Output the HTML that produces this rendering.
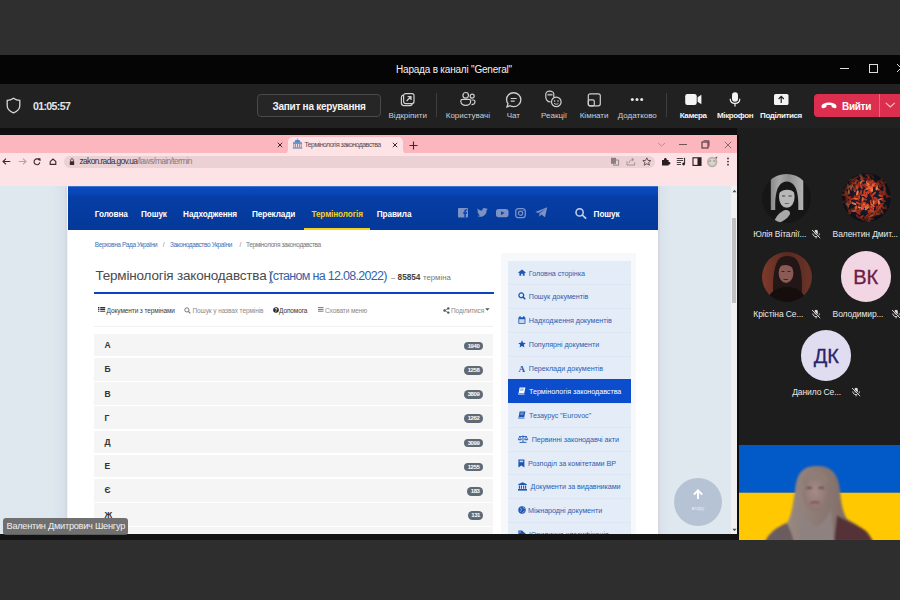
<!DOCTYPE html>
<html><head><meta charset="utf-8">
<style>
*{margin:0;padding:0;box-sizing:border-box}
html,body{width:900px;height:600px;overflow:hidden;background:#2e2e2e;font-family:"Liberation Sans",sans-serif}
.a{position:absolute;white-space:nowrap}
svg.a{overflow:visible}
.t8{font-size:8px;line-height:8px;top:111.8px;text-align:center}
.t8b{font-size:8px;line-height:8px;top:111.8px;text-align:center;font-weight:bold;letter-spacing:-0.4px}
.t10{font-size:10px;line-height:10px}
.t10b{font-size:10px;line-height:10px;font-weight:bold}
#top{left:0;top:0;width:900px;height:55px;background:#2f2f2f}
#tbar{left:0;top:55px;width:900px;height:29px;background:#050505}
#tool{left:0;top:84px;width:900px;height:44px;background:#212121}
#tool2{left:0;top:128px;width:737px;height:7px;background:#100e0f}
#right{left:737px;top:128px;width:163px;height:412px;background:#1d1d1d}
#bottom{left:0;top:540px;width:900px;height:60px;background:#2e2e2e}
#bstrip{left:0;top:534px;width:739px;height:6px;background:#141414}
#browser{left:0;top:135px;width:737px;height:399px;background:#dfe8ef;overflow:hidden}
#tabs{left:0;top:0;width:737px;height:18px;background:#fbb6be}
#addr{left:0;top:18px;width:737px;height:33px;background:#fde3e6}
#page{left:68px;top:51px;width:590px;height:360px;background:#fff}
#hdr{left:0;top:0;width:590px;height:44px;background:linear-gradient(#0844b8,#0539a0)}
</style></head><body>
<div class="a" id="top"></div>
<div class="a" id="tbar"></div>
<div class="a t10" style="left:396px;top:65px;color:#f2f2f2;letter-spacing:-0.2px">Нарада в каналі "General"</div>
<div class="a" style="left:840px;top:68px;width:9px;height:1px;background:#ddd"></div>
<div class="a" style="left:869px;top:64px;width:9px;height:9px;border:1px solid #ddd"></div>
<svg class="a" style="left:895px;top:62px" width="10" height="12"><path d="M2 2 L10 10 M10 2 L2 10" stroke="#ddd" stroke-width="1"/></svg>
<div class="a" id="tool"></div>
<div class="a" id="tool2"></div>
<svg class="a" style="left:6px;top:97px" width="15" height="17" viewBox="0 0 15 17"><path d="M7.5 1.2 C5.5 2.6 3.5 3.3 1.2 3.4 V8.5 C1.2 12 3.6 14.3 7.5 15.8 C11.4 14.3 13.8 12 13.8 8.5 V3.4 C11.5 3.3 9.5 2.6 7.5 1.2 Z" fill="none" stroke="#d8d8d8" stroke-width="1.3"/></svg>
<div class="a" style="left:33px;top:101.4px;font-size:10.6px;line-height:10px;font-weight:bold;color:#e6e6e6;letter-spacing:-0.65px">01:05:57</div>
<div class="a" style="left:257px;top:94px;width:124px;height:23px;border:1px solid #4a4a4a;border-radius:4px;background:#262626"></div>
<div class="a t10b" style="left:257px;top:101.5px;width:124px;text-align:center;color:#f4f4f4;letter-spacing:-0.25px">Запит на керування</div>
<!-- icons -->
<svg class="a" style="left:400px;top:92px" width="16" height="15" viewBox="0 0 16 15"><path d="M3 3.2 C1.9 3.5 1.4 4.3 1.4 5.5 V11 C1.4 12.6 2.4 13.6 4 13.6 H10 C11.2 13.6 12 13.1 12.3 12" fill="none" stroke="#d0d0d0" stroke-width="1.2"/><rect x="3.6" y="1.6" width="10.4" height="10" rx="2" fill="none" stroke="#d0d0d0" stroke-width="1.2"/><path d="M6.6 9 L10.6 5 M7.6 4.6 H11 V8" fill="none" stroke="#d0d0d0" stroke-width="1.2"/></svg>
<div class="a" style="left:436px;top:93px;width:1px;height:24px;background:#3e3e3e"></div>
<svg class="a" style="left:458px;top:91px" width="20" height="16" viewBox="0 0 20 16"><circle cx="7.7" cy="4.3" r="2.8" fill="none" stroke="#d0d0d0" stroke-width="1.2"/><path d="M4.6 8.4 H10.8 C12 8.4 12.7 9.2 12.7 10.2 C12.7 12.8 10.6 14.3 7.7 14.3 C4.8 14.3 2.8 12.8 2.8 10.2 C2.8 9.2 3.5 8.4 4.6 8.4 Z" fill="none" stroke="#d0d0d0" stroke-width="1.2"/><circle cx="14.2" cy="5.2" r="2" fill="none" stroke="#d0d0d0" stroke-width="1.2"/><path d="M13.6 9 H15.3 C16.3 9 17 9.7 17 10.6 C17 12.6 15.6 13.7 13.5 13.7" fill="none" stroke="#d0d0d0" stroke-width="1.2"/></svg>
<svg class="a" style="left:505px;top:92px" width="18" height="17" viewBox="0 0 18 17"><g transform="translate(8.7 7.7) scale(1.1) translate(-8.7 -7.7)"><path d="M2.6 14.3 L3.5 11.3 C2.6 10 2.2 8.8 2.2 7.5 C2.2 4 5.0 1.4 8.6 1.4 C12.2 1.4 15.2 4.2 15.2 7.7 C15.2 11.2 12.2 14 8.6 14 C7.4 14 6.3 13.7 5.4 13.2 Z" fill="none" stroke="#d0d0d0" stroke-width="1.2"/><path d="M6 6.6 H11.4 M6 9 H9.6" stroke="#d0d0d0" stroke-width="1.1"/></g></svg>
<svg class="a" style="left:544px;top:90px" width="20" height="19" viewBox="0 0 20 19"><path d="M6.5 11.9 C3.6 11.9 1.8 9.8 1.8 7 V4.2 C1.8 2.4 3.5 1.2 5.7 1.2 C8 1.2 9.8 2.4 9.8 4.2 V7 L11.4 8.2" fill="none" stroke="#d0d0d0" stroke-width="1.2"/><path d="M3.5 3.8 H8.5 V5.6 H3.5Z" fill="#aaa"/><circle cx="12.3" cy="11.9" r="4.8" fill="#222" stroke="#d0d0d0" stroke-width="1.2"/><circle cx="10.6" cy="11" r="0.8" fill="#d0d0d0"/><circle cx="14" cy="11" r="0.8" fill="#d0d0d0"/><path d="M10.2 13.3 C11.2 14.5 13.4 14.5 14.4 13.3" fill="none" stroke="#d0d0d0" stroke-width="1"/></svg>
<svg class="a" style="left:586px;top:92px" width="16" height="16" viewBox="0 0 16 16"><rect x="2.3" y="1.8" width="12" height="12" rx="2" fill="none" stroke="#d0d0d0" stroke-width="1.2"/><rect x="2.3" y="7.8" width="6" height="6" rx="1.4" fill="none" stroke="#d0d0d0" stroke-width="1.2"/></svg>
<svg class="a" style="left:629px;top:96px" width="16" height="7"><circle cx="3.3" cy="3.5" r="1.5" fill="#e8e8e8"/><circle cx="8" cy="3.5" r="1.5" fill="#e8e8e8"/><circle cx="12.7" cy="3.5" r="1.5" fill="#e8e8e8"/></svg>
<div class="a" style="left:666px;top:93px;width:1px;height:24px;background:#3e3e3e"></div>
<svg class="a" style="left:684px;top:93px" width="19" height="13" viewBox="0 0 19 13"><rect x="1.2" y="1" width="11.5" height="11" rx="2.2" fill="#f4f4f4"/><path d="M13.6 4.2 L17.4 1.8 V11.2 L13.6 8.8 Z" fill="#f4f4f4"/></svg>
<svg class="a" style="left:729px;top:91px" width="12" height="17" viewBox="0 0 12 17"><rect x="3" y="1.2" width="6" height="9.6" rx="3" fill="#f4f4f4"/><path d="M1.2 7.8 C1.2 10.6 3.2 12.4 6 12.4 C8.8 12.4 10.8 10.6 10.8 7.8 M6 12.4 V15.6" fill="none" stroke="#f4f4f4" stroke-width="1.2"/></svg>
<svg class="a" style="left:773px;top:93px" width="17" height="13" viewBox="0 0 17 13"><rect x="1" y="1" width="14.5" height="11" rx="1.6" fill="#f4f4f4"/><path d="M8.2 10 V3.6 M5.6 6 L8.2 3.4 L10.8 6" fill="none" stroke="#222" stroke-width="1.2"/></svg>
<div class="a t8" style="left:367.75px;width:80px;color:#cfcfcf">Відкріпити</div>
<div class="a t8" style="left:427.85px;width:80px;color:#cfcfcf">Користувачі</div>
<div class="a t8" style="left:473.3px;width:80px;color:#cfcfcf">Чат</div>
<div class="a t8" style="left:514.1px;width:80px;color:#cfcfcf">Реакції</div>
<div class="a t8" style="left:554.1px;width:80px;color:#cfcfcf">Кімнати</div>
<div class="a t8" style="left:597.3px;width:80px;color:#cfcfcf">Додатково</div>
<div class="a t8b" style="left:653.15px;width:80px;color:#f4f4f4">Камера</div>
<div class="a t8b" style="left:695.15px;width:80px;color:#f4f4f4">Мікрофон</div>
<div class="a t8b" style="left:741px;width:80px;color:#f4f4f4">Поділитися</div>
<div class="a" style="left:814px;top:94px;width:90px;height:23px;border-radius:4px;background:#dc2f4f"></div>
<div class="a" style="left:879px;top:94px;width:1px;height:23px;background:#e86a80"></div>
<svg class="a" style="left:820px;top:101px" width="18" height="9" viewBox="0 0 18 9"><path d="M1.6 6.2 C1.2 4.6 2 3.2 4 2.4 C7 1.2 11 1.2 14 2.4 C16 3.2 16.8 4.6 16.4 6.2 C16.2 7 15.6 7.4 14.8 7.2 L12.6 6.6 C11.9 6.4 11.6 5.9 11.6 5.2 V4.4 C9.8 3.9 8.2 3.9 6.4 4.4 V5.2 C6.4 5.9 6.1 6.4 5.4 6.6 L3.2 7.2 C2.4 7.4 1.8 7 1.6 6.2Z" fill="#fff"/></svg>
<div class="a t10b" style="left:842px;top:101.5px;color:#fff;letter-spacing:-0.3px">Вийти</div>
<svg class="a" style="left:884px;top:101px" width="13" height="8"><path d="M1.8 1.8 L6.3 6 L10.8 1.8" fill="none" stroke="#f4c0ca" stroke-width="1.1"/></svg>
<div class="a" id="browser">
  <div class="a" id="tabs"></div>
  <div class="a" id="addr"></div>
  <!-- inactive tab close -->
  <svg class="a" style="left:277px;top:7px" width="6" height="6"><path d="M0.8 0.8 L5.2 5.2 M5.2 0.8 L0.8 5.2" stroke="#3a2a2e" stroke-width="1"/></svg>
  <!-- active tab -->
  <svg class="a" style="left:282px;top:1px" width="128" height="18" viewBox="0 0 128 18"><path d="M0 18 C4 18 6 16 6 13 V6 C6 3 8 1 11 1 H116 C119 1 121 3 121 6 V13 C121 16 123 18 127 18 Z" fill="#fde3e6"/></svg>
  <svg class="a" style="left:292px;top:2px" width="11" height="12" viewBox="0 0 11 12"><path d="M5.5 1 L5.5 3" stroke="#e8b030" stroke-width="1"/><path d="M2.5 5.5 C2.5 3.5 3.8 2.8 5.5 2.8 C7.2 2.8 8.5 3.5 8.5 5.5 Z" fill="#4a8ad0"/><rect x="1" y="5.5" width="9" height="1.2" fill="#3a70b8"/><path d="M1.8 7 V10.5 M3.6 7 V10.5 M5.5 7 V10.5 M7.4 7 V10.5 M9.2 7 V10.5" stroke="#6a8aa8" stroke-width="0.9"/><rect x="0.8" y="10.4" width="9.4" height="1.2" fill="#6a8aa8"/></svg>
  <div class="a" style="left:304.5px;top:5.8px;font-size:7px;line-height:7px;color:#5a4a4e;letter-spacing:-0.58px">Термінологія законодавства</div>
  <svg class="a" style="left:392px;top:7px" width="6" height="6"><path d="M0.8 0.8 L5.2 5.2 M5.2 0.8 L0.8 5.2" stroke="#3a2a2e" stroke-width="1"/></svg>
  <svg class="a" style="left:409px;top:5.5px" width="9" height="9"><path d="M4.5 0.5 V8.5 M0.5 4.5 H8.5" stroke="#3a2a2e" stroke-width="1.1"/></svg>
  <!-- window controls -->
  <svg class="a" style="left:657px;top:7px" width="9" height="6"><path d="M1 1 L4.5 4.2 L8 1" fill="none" stroke="#b88890" stroke-width="0.9"/></svg>
  <div class="a" style="left:679px;top:9px;width:8px;height:1px;background:#705558"></div>
  <svg class="a" style="left:701px;top:5px" width="9" height="9"><rect x="1" y="2" width="6" height="6" fill="none" stroke="#50383c" stroke-width="1.1"/><path d="M2.5 0.8 H8 V6.5" fill="none" stroke="#50383c" stroke-width="0.9"/></svg>
  <svg class="a" style="left:723.5px;top:5.5px" width="8" height="8"><path d="M0.8 0.8 L7.2 7.2 M7.2 0.8 L0.8 7.2" stroke="#806468" stroke-width="0.9"/></svg>
  <!-- nav icons -->
  <svg class="a" style="left:2px;top:22.5px" width="9" height="7"><path d="M8.3 3.5 H1.2 M4 0.6 L1 3.5 L4 6.4" fill="none" stroke="#3a2a2e" stroke-width="1.1"/></svg>
  <svg class="a" style="left:18px;top:22.5px" width="9" height="7"><path d="M0.7 3.5 H7.8 M5 0.6 L8 3.5 L5 6.4" fill="none" stroke="#b8a0a5" stroke-width="1.1"/></svg>
  <svg class="a" style="left:33px;top:23px" width="8" height="7"><path d="M6.4 2.2 A2.9 2.9 0 1 0 6.8 4.4" fill="none" stroke="#3a2a2e" stroke-width="1.1"/><path d="M5 0.6 H7.2 V2.8 Z" fill="#3a2a2e" stroke="#3a2a2e" stroke-width="0.6"/></svg>
  <svg class="a" style="left:48.5px;top:23px" width="8" height="7"><path d="M1.2 3.6 L4 1 L6.8 3.6 V6.4 H1.2 Z" fill="none" stroke="#3a2a2e" stroke-width="1.1"/></svg>
  <!-- address pill -->
  <div class="a" style="left:64px;top:20.5px;width:591px;height:12px;border-radius:6px;background:#ebd0d4"></div>
  <svg class="a" style="left:69px;top:22.5px" width="6" height="8"><path d="M1.6 3.4 V2.4 C1.6 1.3 2.2 0.7 3 0.7 C3.8 0.7 4.4 1.3 4.4 2.4 V3.4" fill="none" stroke="#3a2a2e" stroke-width="0.9"/><rect x="0.8" y="3.3" width="4.4" height="3.8" rx="0.5" fill="#3a2a2e"/></svg>
  <div class="a" style="left:79.5px;top:22px;font-size:8.4px;line-height:8px;letter-spacing:-0.62px;color:#3a2e31">zakon.rada.gov.ua<span style="color:#8a7a7d">/laws/main/termin</span></div>
  <svg class="a" style="left:610px;top:22px" width="10" height="9"><rect x="1" y="0.8" width="5" height="6" fill="#8a7e82"/><path d="M5 3 H8.6 V8.2 H3.6 V7" fill="none" stroke="#8a7e82" stroke-width="0.9"/></svg>
  <svg class="a" style="left:626px;top:22px" width="10" height="9"><path d="M1 4.5 V8 H8.6 V5.4" fill="none" stroke="#9a8a8e" stroke-width="0.9"/><path d="M3 6 C3.4 3.6 5 2.6 7 2.6 M5.8 1 L7.8 2.6 L5.8 4.2" fill="none" stroke="#9a8a8e" stroke-width="0.9"/></svg>
  <svg class="a" style="left:641.5px;top:22px" width="10" height="9"><path d="M4.8 0.8 L6 3.4 L8.8 3.6 L6.7 5.4 L7.4 8.2 L4.8 6.7 L2.2 8.2 L2.9 5.4 L0.8 3.6 L3.6 3.4 Z" fill="none" stroke="#5a4a4e" stroke-width="0.9"/></svg>
  <!-- extension icons -->
  <svg class="a" style="left:661px;top:22px" width="10" height="9"><path d="M1 3 H3 C3 1.6 3.6 1 4.4 1 C5.2 1 5.8 1.6 5.8 3 H7.6 V5 C8.8 5 9.4 5.5 9.4 6.3 C9.4 7.1 8.8 7.6 7.6 7.6 V8.6 H1 Z" fill="#2a1e22"/></svg>
  <svg class="a" style="left:676px;top:22px" width="11" height="9"><path d="M0.8 1.5 H7.2 M0.8 3.5 H7.2 M0.8 5.5 H5 M0.8 7.5 H5" stroke="#3a2e31" stroke-width="0.9"/><path d="M8.6 0.8 V6.8" stroke="#2a1e22" stroke-width="1"/><circle cx="7.6" cy="7" r="1.4" fill="#2a1e22"/></svg>
  <svg class="a" style="left:692px;top:22px" width="10" height="9"><rect x="1" y="0.8" width="8" height="7.6" fill="none" stroke="#2a1e22" stroke-width="1.1"/><rect x="5.5" y="0.8" width="3.5" height="7.6" fill="#2a1e22"/></svg>
  <svg class="a" style="left:706px;top:20.5px" width="13" height="12"><circle cx="6.2" cy="6" r="5.2" fill="#b8b2a8"/><circle cx="6.2" cy="6" r="3.4" fill="#d8d4cc"/><path d="M3.4 5 H5 M7.4 5 H9" stroke="#6a625a" stroke-width="0.8"/><path d="M9 1.2 L11.4 0.6 L10.8 3" fill="#6a625a"/></svg>
  <svg class="a" style="left:726px;top:22px" width="4" height="10"><circle cx="2" cy="1.5" r="0.9" fill="#3a2e31"/><circle cx="2" cy="4.6" r="0.9" fill="#3a2e31"/><circle cx="2" cy="7.7" r="0.9" fill="#3a2e31"/></svg>
  <!-- scrollbar -->
  <div class="a" style="left:731px;top:51px;width:6px;height:348px;background:#f1f1f1"></div>
  <svg class="a" style="left:732px;top:54px" width="5" height="4"><path d="M0.4 3.2 L2.5 0.8 L4.6 3.2 Z" fill="#555"/></svg>
  <div class="a" style="left:732px;top:82.5px;width:4px;height:85px;background:#c1c1c1"></div>
  <svg class="a" style="left:732px;top:393px" width="5" height="4"><path d="M0.4 0.8 L2.5 3.2 L4.6 0.8 Z" fill="#555"/></svg>
  <div class="a" style="left:52px;top:51px;width:13px;height:348px;background:linear-gradient(90deg,rgba(160,170,190,0),rgba(160,170,190,0.12))"></div>
  <div class="a" style="left:64.5px;top:51px;width:2px;height:348px;background:#d3dae0"></div>
  <div class="a" style="left:66.5px;top:51px;width:1.5px;height:348px;background:#f2f5f8"></div>
  <div class="a" style="left:658px;top:51px;width:12px;height:348px;background:linear-gradient(90deg,rgba(160,170,190,0.12),rgba(160,170,190,0))"></div>
  <div class="a" style="left:658px;top:51px;width:2px;height:348px;background:#d6dade"></div>
  <div class="a" id="page">
<div class="a" style="left:0;top:0;width:590px;height:44px;background:linear-gradient(#0a4ac0 0px,#0846b8 7px,#063ea6 11px,#053b9e 30px,#04399a 44px)"></div>
<div class="a" style="left:0;top:0;width:590px;height:1px;background:#3a72c8"></div>
<div class="a" style="left:26.8px;top:24.8px;font-size:8.2px;line-height:8px;font-weight:bold;color:#fff;letter-spacing:-0.1px">Головна</div>
<div class="a" style="left:73px;top:24.8px;font-size:8.2px;line-height:8px;font-weight:bold;color:#fff;letter-spacing:-0.1px">Пошук</div>
<div class="a" style="left:115.1px;top:24.8px;font-size:8.2px;line-height:8px;font-weight:bold;color:#fff;letter-spacing:-0.1px">Надходження</div>
<div class="a" style="left:184px;top:24.8px;font-size:8.2px;line-height:8px;font-weight:bold;color:#fff;letter-spacing:-0.1px">Переклади</div>
<div class="a" style="left:243.4px;top:24.8px;font-size:8.2px;line-height:8px;font-weight:bold;color:#f6d21c;letter-spacing:-0.1px">Термінологія</div>
<div class="a" style="left:308.8px;top:24.8px;font-size:8.2px;line-height:8px;font-weight:bold;color:#fff;letter-spacing:-0.1px">Правила</div>
<div class="a" style="left:236px;top:42px;width:66px;height:2px;background:#f5d21e"></div>
<svg class="a" style="left:389.6px;top:21.6px" width="10" height="10"><rect x="0" y="0" width="10" height="9.6" rx="0.8" fill="#7d93c4"/><path d="M7.8 9.6 V5.8 H9 L9.2 4.3 H7.8 V3.4 C7.8 2.9 8 2.6 8.6 2.6 H9.3 V1.3 C9 1.2 8.6 1.2 8.1 1.2 C7 1.2 6.3 1.9 6.3 3.1 V4.3 H5.1 V5.8 H6.3 V9.6 Z" fill="#0742b5"/></svg>
<svg class="a" style="left:409px;top:22.3px" width="11" height="9" viewBox="0 0 24 20"><path d="M23.6 2.4 C22.7 2.8 21.8 3 20.8 3.2 C21.8 2.6 22.6 1.6 22.9 0.5 C21.9 1.1 20.9 1.5 19.8 1.7 C18.9 0.7 17.6 0.1 16.2 0.1 C13.5 0.1 11.3 2.3 11.3 5 C11.3 5.4 11.3 5.8 11.4 6.1 C7.3 5.9 3.7 4 1.3 1 C0.9 1.7 0.6 2.6 0.6 3.5 C0.6 5.2 1.5 6.7 2.8 7.6 C2 7.6 1.3 7.4 0.6 7 V7.1 C0.6 9.5 2.3 11.5 4.5 11.9 C4.1 12 3.7 12.1 3.2 12.1 C2.9 12.1 2.6 12.1 2.3 12 C2.9 14 4.7 15.4 6.9 15.4 C5.2 16.7 3.1 17.5 0.8 17.5 C0.4 17.5 0 17.5 -0.4 17.4 C1.8 18.8 4.4 19.6 7.2 19.6 C16.2 19.6 21.2 12.1 21.2 5.6 V5 C22.1 4.3 22.9 3.4 23.6 2.4Z" fill="#7d93c4"/></svg>
<svg class="a" style="left:428px;top:23.4px" width="12.5" height="8.2"><rect x="0" y="0" width="12.5" height="8.2" rx="2.6" fill="#7d93c4"/><path d="M5 2.2 L8.6 4.1 L5 6 Z" fill="#0742b5"/></svg>
<svg class="a" style="left:447px;top:21.6px" width="11" height="10"><rect x="0.7" y="0.7" width="9.6" height="9" rx="2.6" fill="none" stroke="#7d93c4" stroke-width="1.3"/><circle cx="5.5" cy="5.2" r="2.1" fill="none" stroke="#7d93c4" stroke-width="1.2"/><circle cx="8.2" cy="2.5" r="0.6" fill="#7d93c4"/></svg>
<svg class="a" style="left:467px;top:21px" width="12.5" height="10.5" viewBox="0 0 12.5 10.5"><path d="M0.3 5 L12.2 0.2 L10 10.3 L6.4 7.6 L4.3 9.8 L4.4 6.6 L10.4 1.8 L3.5 5.9 Z" fill="#7d93c4"/></svg>
<svg class="a" style="left:507px;top:21.6px" width="12" height="11"><circle cx="4.6" cy="4.4" r="3.6" fill="none" stroke="#c9d2ea" stroke-width="1.5"/><path d="M7.2 7 L10.6 10.2" stroke="#c9d2ea" stroke-width="1.7" stroke-linecap="round"/></svg>
<div class="a" style="left:525.6px;top:24.8px;font-size:8.2px;line-height:8px;font-weight:bold;color:#fff;letter-spacing:-0.1px">Пошук</div>
<div class="a" style="left:26.7px;font-size:6.5px;line-height:7px;letter-spacing:-0.38px;top:55px;color:#3f6fb6">Верховна Рада України</div>
<div class="a" style="left:94.8px;font-size:6.5px;line-height:7px;letter-spacing:-0.38px;top:55px;color:#888">/</div>
<div class="a" style="left:102px;font-size:6.5px;line-height:7px;letter-spacing:-0.38px;top:55px;color:#3f6fb6">Законодавство України</div>
<div class="a" style="left:171.6px;font-size:6.5px;line-height:7px;letter-spacing:-0.38px;top:55px;color:#888">/</div>
<div class="a" style="left:178px;font-size:6.5px;line-height:7px;letter-spacing:-0.38px;top:55px;color:#777">Термінологія законодавства</div>
<div class="a" style="left:27.4px;top:82.9px;font-size:13.5px;line-height:13.5px;color:#4a4a4a;letter-spacing:-0.18px">Термінологія законодавства</div>
<svg class="a" style="left:200px;top:84.5px" width="5" height="13"><path d="M1 0.5 C1.8 0.5 2.4 1 2.4 1.8 V10.8 C2.4 11.6 3 12.2 3.8 12.2 M3.8 0.5 C3 0.5 2.4 1 2.4 1.8 M2.4 10.8 C2.4 11.6 1.8 12.2 1 12.2" fill="none" stroke="#666" stroke-width="0.9"/></svg>
<div class="a" style="left:201.2px;top:83.6px;font-size:12.5px;line-height:12.5px;color:#3462a8;letter-spacing:-0.7px">(станом на 12.08.2022)</div>
<div class="a" style="left:323px;top:87.6px;font-size:7.7px;line-height:8px;color:#666">–</div>
<div class="a" style="left:329.6px;top:87.2px;font-size:8.3px;line-height:8px;font-weight:bold;color:#444;letter-spacing:-0.05px">85854</div>
<div class="a" style="left:355px;top:87.6px;font-size:7.75px;line-height:8px;color:#777">терміна</div>
<div class="a" style="left:26px;top:105.7px;width:400px;height:2.3px;background:#0a44c6"></div>
<svg class="a" style="left:30px;top:121px" width="8" height="5"><path d="M0 0.6 H1.4 M0 2.4 H1.4 M0 4.2 H1.4" stroke="#333" stroke-width="1.1"/><path d="M2.2 0.6 H7.2 M2.2 2.4 H7.2 M2.2 4.2 H7.2" stroke="#333" stroke-width="1.1"/></svg>
<div class="a" style="left:38.6px;font-size:6.5px;line-height:7px;top:120.5px;color:#3a3a3a;letter-spacing:-0.1px">Документи з термінами</div>
<svg class="a" style="left:116px;top:120.5px" width="7" height="7"><circle cx="2.9" cy="2.9" r="2.1" fill="none" stroke="#777" stroke-width="1"/><path d="M4.5 4.5 L6.4 6.4" stroke="#777" stroke-width="1.1"/></svg>
<div class="a" style="left:124.5px;font-size:6.5px;line-height:7px;top:120.5px;color:#8a8a8a;letter-spacing:-0.1px">Пошук у назвах термінів</div>
<svg class="a" style="left:204.5px;top:120.5px" width="6" height="6"><circle cx="3" cy="3" r="2.8" fill="#222"/><text x="3" y="5" font-size="4.6" font-weight="bold" fill="#fff" text-anchor="middle" font-family="Liberation Sans">?</text></svg>
<div class="a" style="left:211px;font-size:6.5px;line-height:7px;top:120.5px;color:#333;letter-spacing:-0.1px">Допомога</div>
<svg class="a" style="left:250px;top:121px" width="6" height="5"><path d="M0 0.6 H5.5 M0 2.4 H5.5 M0 4.2 H5.5" stroke="#777" stroke-width="1"/></svg>
<div class="a" style="left:257px;font-size:6.5px;line-height:7px;top:120.5px;color:#888;letter-spacing:-0.1px">Сховати меню</div>
<svg class="a" style="left:375px;top:120.5px" width="7" height="7"><circle cx="1.5" cy="3.5" r="1.2" fill="#555"/><circle cx="5.3" cy="1.4" r="1.2" fill="#555"/><circle cx="5.3" cy="5.6" r="1.2" fill="#555"/><path d="M1.5 3.5 L5.3 1.4 M1.5 3.5 L5.3 5.6" stroke="#555" stroke-width="0.7"/></svg>
<div class="a" style="left:383px;font-size:6.5px;line-height:7px;top:120.5px;color:#888;letter-spacing:-0.1px">Поділитися</div>
<svg class="a" style="left:417px;top:122px" width="5" height="3"><path d="M0.2 0.3 L4.6 0.3 L2.4 2.8 Z" fill="#555"/></svg>
<div class="a" style="left:26px;top:140px;width:399px;height:1px;background:#f0f0f0"></div>
<div class="a" style="left:26px;top:147.8px;width:399px;height:22.6px;background:#f5f5f5"></div>
<div class="a" style="left:36.5px;top:155.1px;font-size:8.5px;line-height:8px;font-weight:bold;color:#333">А</div>
<div class="a" style="left:396px;top:155.8px;width:19px;height:8.5px;border-radius:4.3px;background:#5f6a74;color:#fff;font-size:6px;line-height:8.5px;font-weight:bold;text-align:center;letter-spacing:-0.45px">1940</div>
<div class="a" style="left:26px;top:172.0px;width:399px;height:22.6px;background:#f5f5f5"></div>
<div class="a" style="left:36.5px;top:179.3px;font-size:8.5px;line-height:8px;font-weight:bold;color:#333">Б</div>
<div class="a" style="left:396px;top:180.0px;width:19px;height:8.5px;border-radius:4.3px;background:#5f6a74;color:#fff;font-size:6px;line-height:8.5px;font-weight:bold;text-align:center;letter-spacing:-0.45px">1258</div>
<div class="a" style="left:26px;top:196.2px;width:399px;height:22.6px;background:#f5f5f5"></div>
<div class="a" style="left:36.5px;top:203.5px;font-size:8.5px;line-height:8px;font-weight:bold;color:#333">В</div>
<div class="a" style="left:396px;top:204.2px;width:19px;height:8.5px;border-radius:4.3px;background:#5f6a74;color:#fff;font-size:6px;line-height:8.5px;font-weight:bold;text-align:center;letter-spacing:-0.45px">3809</div>
<div class="a" style="left:26px;top:220.4px;width:399px;height:22.6px;background:#f5f5f5"></div>
<div class="a" style="left:36.5px;top:227.7px;font-size:8.5px;line-height:8px;font-weight:bold;color:#333">Г</div>
<div class="a" style="left:396px;top:228.4px;width:19px;height:8.5px;border-radius:4.3px;background:#5f6a74;color:#fff;font-size:6px;line-height:8.5px;font-weight:bold;text-align:center;letter-spacing:-0.45px">1262</div>
<div class="a" style="left:26px;top:244.6px;width:399px;height:22.6px;background:#f5f5f5"></div>
<div class="a" style="left:36.5px;top:251.9px;font-size:8.5px;line-height:8px;font-weight:bold;color:#333">Д</div>
<div class="a" style="left:396px;top:252.6px;width:19px;height:8.5px;border-radius:4.3px;background:#5f6a74;color:#fff;font-size:6px;line-height:8.5px;font-weight:bold;text-align:center;letter-spacing:-0.45px">3099</div>
<div class="a" style="left:26px;top:268.8px;width:399px;height:22.6px;background:#f5f5f5"></div>
<div class="a" style="left:36.5px;top:276.1px;font-size:8.5px;line-height:8px;font-weight:bold;color:#333">Е</div>
<div class="a" style="left:396px;top:276.8px;width:19px;height:8.5px;border-radius:4.3px;background:#5f6a74;color:#fff;font-size:6px;line-height:8.5px;font-weight:bold;text-align:center;letter-spacing:-0.45px">1255</div>
<div class="a" style="left:26px;top:293.0px;width:399px;height:22.6px;background:#f5f5f5"></div>
<div class="a" style="left:36.5px;top:300.3px;font-size:8.5px;line-height:8px;font-weight:bold;color:#333">Є</div>
<div class="a" style="left:399.2px;top:301.0px;width:15.8px;height:8.5px;border-radius:4.3px;background:#5f6a74;color:#fff;font-size:6px;line-height:8.5px;font-weight:bold;text-align:center;letter-spacing:-0.45px">183</div>
<div class="a" style="left:26px;top:317.2px;width:399px;height:22.6px;background:#f5f5f5"></div>
<div class="a" style="left:36.5px;top:324.5px;font-size:8.5px;line-height:8px;font-weight:bold;color:#333">Ж</div>
<div class="a" style="left:400.4px;top:325.2px;width:14.6px;height:8.5px;border-radius:4.3px;background:#5f6a74;color:#fff;font-size:6px;line-height:8.5px;font-weight:bold;text-align:center;letter-spacing:-0.45px">131</div>
<div class="a" style="left:26px;top:341.4px;width:399px;height:22.6px;background:#f5f5f5"></div>
<div class="a" style="left:36.5px;top:348.7px;font-size:8.5px;line-height:8px;font-weight:bold;color:#333">З</div>
<div class="a" style="left:432.5px;top:66.5px;width:135.5px;height:320px;background:#f6f8fb"></div>
<div class="a" style="left:440px;top:74.5px;width:123px;height:300px;background:#e4ecf7"></div>
<div class="a" style="left:460.8px;top:83.5px;font-size:7.2px;line-height:7px;color:#2b5fb3;letter-spacing:-0.05px">Головна сторінка</div>
<div class="a" style="left:440px;top:98.25px;width:123px;height:1px;background:#dde6f2"></div>
<div class="a" style="left:460.8px;top:107.25px;font-size:7.2px;line-height:7px;color:#2b5fb3;letter-spacing:-0.05px">Пошук документів</div>
<div class="a" style="left:440px;top:122.0px;width:123px;height:1px;background:#dde6f2"></div>
<div class="a" style="left:460.8px;top:131.0px;font-size:7.2px;line-height:7px;color:#2b5fb3;letter-spacing:-0.05px">Надходження документів</div>
<div class="a" style="left:440px;top:145.75px;width:123px;height:1px;background:#dde6f2"></div>
<div class="a" style="left:460.8px;top:154.75px;font-size:7.2px;line-height:7px;color:#2b5fb3;letter-spacing:-0.05px">Популярні документи</div>
<div class="a" style="left:440px;top:169.5px;width:123px;height:1px;background:#dde6f2"></div>
<div class="a" style="left:460.8px;top:178.5px;font-size:7.2px;line-height:7px;color:#2b5fb3;letter-spacing:-0.05px">Переклади документів</div>
<div class="a" style="left:440px;top:193.25px;width:123px;height:24px;background:#0b4dcc"></div>
<div class="a" style="left:461px;top:202.25px;font-size:7.2px;line-height:7px;color:#fff;letter-spacing:-0.05px">Термінологія законодавства</div>
<div class="a" style="left:440px;top:217.0px;width:123px;height:1px;background:#dde6f2"></div>
<div class="a" style="left:461px;top:226.0px;font-size:7.2px;line-height:7px;color:#2b5fb3;letter-spacing:-0.05px">Тезаурус "Eurovoc"</div>
<div class="a" style="left:440px;top:240.75px;width:123px;height:1px;background:#dde6f2"></div>
<div class="a" style="left:463.75px;top:249.75px;font-size:7.2px;line-height:7px;color:#2b5fb3;letter-spacing:-0.05px">Первинні законодавчі акти</div>
<div class="a" style="left:440px;top:264.5px;width:123px;height:1px;background:#dde6f2"></div>
<div class="a" style="left:460px;top:273.5px;font-size:7.2px;line-height:7px;color:#2b5fb3;letter-spacing:-0.05px">Розподіл за комітетами ВР</div>
<div class="a" style="left:440px;top:288.25px;width:123px;height:1px;background:#dde6f2"></div>
<div class="a" style="left:462.5px;top:297.25px;font-size:7.2px;line-height:7px;color:#2b5fb3;letter-spacing:-0.05px">Документи за видавниками</div>
<div class="a" style="left:440px;top:312.0px;width:123px;height:1px;background:#dde6f2"></div>
<div class="a" style="left:460px;top:321.0px;font-size:7.2px;line-height:7px;color:#2b5fb3;letter-spacing:-0.05px">Міжнародні документи</div>
<div class="a" style="left:440px;top:335.75px;width:123px;height:1px;background:#dde6f2"></div>
<div class="a" style="left:461px;top:344.75px;font-size:7.2px;line-height:7px;color:#2b5fb3;letter-spacing:-0.05px">Юридична класифікація</div>
<svg class="a" style="left:450.2px;top:83.0px" width="8" height="7"><path d="M0.2 3.6 L4 0.4 L7.8 3.6 L7.2 4.2 L6.6 3.7 V6.8 H4.8 V4.8 H3.2 V6.8 H1.4 V3.7 L0.8 4.2 Z" fill="#1d55b7"/></svg>
<svg class="a" style="left:450.2px;top:106.45px" width="8" height="8"><circle cx="3.3" cy="3.3" r="2.4" fill="none" stroke="#1d55b7" stroke-width="1.3"/><path d="M5 5 L7.2 7.2" stroke="#1d55b7" stroke-width="1.6"/></svg>
<svg class="a" style="left:450.2px;top:130.2px" width="8" height="8"><rect x="0.4" y="1.2" width="7" height="6.6" rx="0.6" fill="#1d55b7"/><rect x="1.2" y="3.2" width="5.4" height="3.8" fill="#c8d8ef"/><path d="M2 0 V2 M5.8 0 V2" stroke="#1d55b7" stroke-width="1"/></svg>
<svg class="a" style="left:450.2px;top:153.95px" width="8" height="8"><path d="M4 0.2 L5.1 2.7 L7.8 2.9 L5.8 4.7 L6.4 7.4 L4 6 L1.6 7.4 L2.2 4.7 L0.2 2.9 L2.9 2.7 Z" fill="#1d55b7"/></svg>
<svg class="a" style="left:450.2px;top:177.7px" width="8" height="8"><text x="3.8" y="7.6" font-size="9" font-family="Liberation Serif" font-weight="bold" fill="#1d55b7" text-anchor="middle">A</text></svg>
<svg class="a" style="left:450.2px;top:201.45px" width="8" height="8"><path d="M1.6 0.4 H7.4 L6.2 6.2 H0.6 Z" fill="#fff"/><path d="M0.6 6.2 C0 6.4 0 7.6 0.8 7.6 H6.4 L6.6 6.8 H1.2" fill="#fff"/><path d="M2.4 2 H5.8 M2.2 3.2 H5.4" stroke="#0b4dcc" stroke-width="0.5"/></svg>
<svg class="a" style="left:450.2px;top:225.2px" width="8" height="8"><path d="M1.6 0.4 H7.4 L6.2 6.2 H0.6 Z" fill="#1d55b7"/><path d="M0.6 6.2 C0 6.4 0 7.6 0.8 7.6 H6.4 L6.6 6.8 H1.2" fill="#1d55b7"/><path d="M2.4 2 H5.8 M2.2 3.2 H5.4" stroke="#e4ecf7" stroke-width="0.5"/></svg>
<svg class="a" style="left:450.2px;top:248.95px" width="10" height="8"><path d="M5 0.4 V7 M1.5 7.4 H8.5 M1 1.6 H9" stroke="#1d55b7" stroke-width="0.9"/><path d="M0.2 4.4 L1.8 1.6 L3.4 4.4 Z M6.6 4.4 L8.2 1.6 L9.8 4.4 Z" fill="none" stroke="#1d55b7" stroke-width="0.7"/><path d="M0 4.4 C0.4 5.6 3.2 5.6 3.6 4.4 Z M6.4 4.4 C6.8 5.6 9.6 5.6 10 4.4 Z" fill="#1d55b7"/></svg>
<svg class="a" style="left:450.2px;top:272.7px" width="7" height="9"><path d="M0.4 0.4 H6.4 V8.4 L3.4 6.4 L0.4 8.4 Z" fill="#1d55b7"/><rect x="1.6" y="1.6" width="3.6" height="1.6" fill="#c8d8ef"/></svg>
<svg class="a" style="left:450.2px;top:296.45px" width="9" height="9"><path d="M4.5 0.2 L8.8 2.2 V3 H0.2 V2.2 Z" fill="#1d55b7"/><path d="M1.4 3.4 V6.8 M3.4 3.4 V6.8 M5.6 3.4 V6.8 M7.6 3.4 V6.8" stroke="#1d55b7" stroke-width="1.1"/><rect x="0" y="7" width="9" height="1.6" fill="#1d55b7"/></svg>
<svg class="a" style="left:450.2px;top:320.2px" width="8" height="8"><circle cx="4" cy="4" r="3.7" fill="#1d55b7"/><path d="M1.8 1.8 C2.6 2.6 3.4 2.2 3.6 3.4 C3.8 4.6 2.6 4.4 2.4 5.6 M5.2 1 C5 2 6 2.6 6.8 2.4 M4.6 6.8 C5 5.6 6 5.6 6.6 5" fill="none" stroke="#c8d8ef" stroke-width="0.7"/></svg>
<svg class="a" style="left:450.2px;top:343.95px" width="10" height="8"><path d="M0.4 0.4 H4 L8.4 4.4 L5 7.8 L0.4 3.6 Z" fill="#1d55b7"/><circle cx="2" cy="2" r="0.7" fill="#c8d8ef"/></svg>
  </div>
<div class="a" style="left:674px;top:342.7px;width:48px;height:48px;border-radius:50%;background:#b5c3d4"></div>
<svg class="a" style="left:692px;top:354px" width="12" height="11"><path d="M6 10 V1.6 M1.8 5.6 L6 1.4 L10.2 5.6" fill="none" stroke="#fff" stroke-width="2"/></svg>
<div class="a" style="left:674px;top:370.5px;width:48px;text-align:center;font-size:5px;line-height:5px;color:#e8eef5">вгору</div>
</div>
<div class="a" id="right"></div>
<div class="a" style="left:737px;top:135px;width:1.5px;height:405px;background:#0e0e0e"></div>
<svg class="a" style="left:761.7px;top:174.2px" width="49" height="49" viewBox="0 0 49 49"><defs><clipPath id="c1"><circle cx="24.5" cy="24.5" r="24.5"/></clipPath>
<linearGradient id="cur" x1="0" x2="1"><stop offset="0" stop-color="#8a8a8a"/><stop offset="0.25" stop-color="#a8a8a8"/><stop offset="0.55" stop-color="#909090"/><stop offset="1" stop-color="#b4b4b4"/></linearGradient></defs>
<filter id="b1"><feGaussianBlur stdDeviation="0.5"/></filter><g clip-path="url(#c1)"><g filter="url(#b1)"><rect width="49" height="49" fill="#121212"/>
<rect x="8.8" y="0" width="32.5" height="36" fill="url(#cur)"/>
<path d="M13.5 40 C12.5 26 13 8 24.8 7.5 C36.5 8 37 26 36 41 C31 43 18 43 13.5 40 Z" fill="#191919"/>
<ellipse cx="24.8" cy="23" rx="7.8" ry="10.8" fill="#b8b8b8"/>
<path d="M16.8 19 C17 12 21 10.5 25 10.5 C29.5 10.5 33 12.5 33 19 C29 14.5 21.5 14.5 16.8 19 Z" fill="#191919"/>
<path d="M20 22 H23.2 M26.5 22 H29.7" stroke="#3e3e3e" stroke-width="1.2"/>
<path d="M22.8 29.5 H26.8" stroke="#6a6a6a" stroke-width="1"/>
<path d="M4 49 C6 42 12 37 20 36 L30 36 C38 37 43 42 45 49 Z" fill="#181818"/>
<path d="M12 48 C14 42 18 38 23 36 C27 35.5 29 38 27.5 41 C25 45 21 47 17 49 Z" fill="#a8a8a8"/>
</g></g></svg>
<svg class="a" style="left:841.5px;top:172.8px" width="49" height="49" viewBox="0 0 49 49"><defs><clipPath id="c2"><circle cx="24.5" cy="24.5" r="24.5"/></clipPath><radialGradient id="fg"><stop offset="0.55" stop-color="#000" stop-opacity="0"/><stop offset="1" stop-color="#0a0a10" stop-opacity="0.75"/></radialGradient></defs><g clip-path="url(#c2)"><rect width="49" height="49" fill="#1a1c2c"/><ellipse cx="8.1" cy="29.6" rx="2.7" ry="1.0" transform="rotate(166 8.1 29.6)" fill="#903020"/><ellipse cx="4.2" cy="30.8" rx="2.7" ry="1.0" transform="rotate(34 4.2 30.8)" fill="#903020"/><ellipse cx="10.5" cy="9.6" rx="2.7" ry="1.0" transform="rotate(17 10.5 9.6)" fill="#a02a1a"/><ellipse cx="35.1" cy="37.6" rx="2.7" ry="1.0" transform="rotate(160 35.1 37.6)" fill="#d04024"/><ellipse cx="12.5" cy="16.3" rx="2.7" ry="1.0" transform="rotate(82 12.5 16.3)" fill="#e86034"/><ellipse cx="9.5" cy="9.8" rx="2.7" ry="1.0" transform="rotate(11 9.5 9.8)" fill="#d04024"/><ellipse cx="28.7" cy="35.0" rx="2.7" ry="1.0" transform="rotate(5 28.7 35.0)" fill="#903020"/><ellipse cx="16.3" cy="40.2" rx="2.7" ry="1.0" transform="rotate(35 16.3 40.2)" fill="#d84a2a"/><ellipse cx="14.2" cy="12.0" rx="2.7" ry="1.0" transform="rotate(119 14.2 12.0)" fill="#903020"/><ellipse cx="16.2" cy="12.4" rx="2.7" ry="1.0" transform="rotate(99 16.2 12.4)" fill="#b83220"/><ellipse cx="21.1" cy="12.0" rx="2.7" ry="1.0" transform="rotate(41 21.1 12.0)" fill="#a02a1a"/><ellipse cx="41.5" cy="27.7" rx="2.7" ry="1.0" transform="rotate(19 41.5 27.7)" fill="#b83220"/><ellipse cx="32.7" cy="12.8" rx="2.7" ry="1.0" transform="rotate(172 32.7 12.8)" fill="#d04024"/><ellipse cx="29.5" cy="46.1" rx="2.7" ry="1.0" transform="rotate(9 29.5 46.1)" fill="#c84422"/><ellipse cx="38.9" cy="22.7" rx="2.7" ry="1.0" transform="rotate(13 38.9 22.7)" fill="#d84a2a"/><ellipse cx="26.6" cy="12.7" rx="2.7" ry="1.0" transform="rotate(16 26.6 12.7)" fill="#f08050"/><ellipse cx="39.2" cy="25.9" rx="2.7" ry="1.0" transform="rotate(166 39.2 25.9)" fill="#e86034"/><ellipse cx="24.7" cy="31.8" rx="2.7" ry="1.0" transform="rotate(11 24.7 31.8)" fill="#903020"/><ellipse cx="32.1" cy="40.0" rx="2.7" ry="1.0" transform="rotate(81 32.1 40.0)" fill="#d84a2a"/><ellipse cx="44.6" cy="22.6" rx="2.7" ry="1.0" transform="rotate(75 44.6 22.6)" fill="#c84422"/><ellipse cx="35.6" cy="34.5" rx="2.7" ry="1.0" transform="rotate(38 35.6 34.5)" fill="#a02a1a"/><ellipse cx="39.4" cy="7.4" rx="2.7" ry="1.0" transform="rotate(107 39.4 7.4)" fill="#d04024"/><ellipse cx="28.0" cy="38.5" rx="2.7" ry="1.0" transform="rotate(154 28.0 38.5)" fill="#b83220"/><ellipse cx="33.0" cy="26.8" rx="2.7" ry="1.0" transform="rotate(79 33.0 26.8)" fill="#d04024"/><ellipse cx="26.4" cy="11.4" rx="2.7" ry="1.0" transform="rotate(53 26.4 11.4)" fill="#b83220"/><ellipse cx="33.9" cy="29.2" rx="2.7" ry="1.0" transform="rotate(115 33.9 29.2)" fill="#d04024"/><ellipse cx="13.2" cy="16.2" rx="2.7" ry="1.0" transform="rotate(82 13.2 16.2)" fill="#903020"/><ellipse cx="28.7" cy="17.1" rx="2.7" ry="1.0" transform="rotate(69 28.7 17.1)" fill="#e86034"/><ellipse cx="20.4" cy="34.7" rx="2.7" ry="1.0" transform="rotate(110 20.4 34.7)" fill="#d84a2a"/><ellipse cx="34.4" cy="39.8" rx="2.7" ry="1.0" transform="rotate(100 34.4 39.8)" fill="#c84422"/><ellipse cx="37.7" cy="12.4" rx="2.7" ry="1.0" transform="rotate(76 37.7 12.4)" fill="#b83220"/><ellipse cx="37.2" cy="34.9" rx="2.7" ry="1.0" transform="rotate(46 37.2 34.9)" fill="#c84422"/><ellipse cx="23.6" cy="45.4" rx="2.7" ry="1.0" transform="rotate(107 23.6 45.4)" fill="#a02a1a"/><ellipse cx="2.5" cy="21.7" rx="2.7" ry="1.0" transform="rotate(176 2.5 21.7)" fill="#e86034"/><ellipse cx="26.8" cy="41.5" rx="2.7" ry="1.0" transform="rotate(153 26.8 41.5)" fill="#b83220"/><ellipse cx="20.3" cy="46.1" rx="2.7" ry="1.0" transform="rotate(37 20.3 46.1)" fill="#d04024"/><ellipse cx="37.9" cy="30.7" rx="2.7" ry="1.0" transform="rotate(45 37.9 30.7)" fill="#d04024"/><ellipse cx="30.7" cy="37.0" rx="2.7" ry="1.0" transform="rotate(103 30.7 37.0)" fill="#e86034"/><ellipse cx="31.7" cy="29.2" rx="2.7" ry="1.0" transform="rotate(81 31.7 29.2)" fill="#f08050"/><ellipse cx="13.9" cy="8.6" rx="2.7" ry="1.0" transform="rotate(105 13.9 8.6)" fill="#e86034"/><ellipse cx="5.8" cy="12.7" rx="2.7" ry="1.0" transform="rotate(85 5.8 12.7)" fill="#f08050"/><ellipse cx="17.7" cy="3.0" rx="2.7" ry="1.0" transform="rotate(4 17.7 3.0)" fill="#b83220"/><ellipse cx="5.0" cy="26.7" rx="2.7" ry="1.0" transform="rotate(57 5.0 26.7)" fill="#b83220"/><ellipse cx="39.6" cy="32.2" rx="2.7" ry="1.0" transform="rotate(133 39.6 32.2)" fill="#e86034"/><ellipse cx="30.4" cy="3.3" rx="2.7" ry="1.0" transform="rotate(63 30.4 3.3)" fill="#903020"/><ellipse cx="41.9" cy="12.0" rx="2.7" ry="1.0" transform="rotate(75 41.9 12.0)" fill="#d04024"/><ellipse cx="35.9" cy="11.3" rx="2.7" ry="1.0" transform="rotate(112 35.9 11.3)" fill="#c84422"/><ellipse cx="22.6" cy="26.3" rx="2.7" ry="1.0" transform="rotate(13 22.6 26.3)" fill="#b83220"/><ellipse cx="9.8" cy="6.9" rx="2.7" ry="1.0" transform="rotate(158 9.8 6.9)" fill="#f08050"/><ellipse cx="9.4" cy="37.2" rx="2.7" ry="1.0" transform="rotate(105 9.4 37.2)" fill="#903020"/><ellipse cx="8.0" cy="28.4" rx="2.7" ry="1.0" transform="rotate(93 8.0 28.4)" fill="#d04024"/><ellipse cx="22.0" cy="30.8" rx="2.7" ry="1.0" transform="rotate(4 22.0 30.8)" fill="#b83220"/><ellipse cx="6.5" cy="24.8" rx="2.7" ry="1.0" transform="rotate(166 6.5 24.8)" fill="#a02a1a"/><ellipse cx="35.6" cy="16.0" rx="2.7" ry="1.0" transform="rotate(26 35.6 16.0)" fill="#d84a2a"/><ellipse cx="4.7" cy="22.2" rx="2.7" ry="1.0" transform="rotate(62 4.7 22.2)" fill="#903020"/><ellipse cx="13.2" cy="24.6" rx="2.7" ry="1.0" transform="rotate(73 13.2 24.6)" fill="#a02a1a"/><ellipse cx="29.3" cy="38.8" rx="2.7" ry="1.0" transform="rotate(145 29.3 38.8)" fill="#d84a2a"/><ellipse cx="34.9" cy="14.8" rx="2.7" ry="1.0" transform="rotate(105 34.9 14.8)" fill="#f08050"/><ellipse cx="26.6" cy="32.7" rx="2.7" ry="1.0" transform="rotate(63 26.6 32.7)" fill="#d04024"/><ellipse cx="19.1" cy="2.7" rx="2.7" ry="1.0" transform="rotate(50 19.1 2.7)" fill="#e86034"/><ellipse cx="36.5" cy="34.8" rx="2.7" ry="1.0" transform="rotate(167 36.5 34.8)" fill="#c84422"/><ellipse cx="12.2" cy="35.7" rx="2.7" ry="1.0" transform="rotate(121 12.2 35.7)" fill="#903020"/><ellipse cx="15.5" cy="43.4" rx="2.7" ry="1.0" transform="rotate(50 15.5 43.4)" fill="#d04024"/><ellipse cx="19.2" cy="13.5" rx="2.7" ry="1.0" transform="rotate(64 19.2 13.5)" fill="#d04024"/><ellipse cx="15.2" cy="13.2" rx="2.7" ry="1.0" transform="rotate(34 15.2 13.2)" fill="#a02a1a"/><ellipse cx="25.2" cy="33.1" rx="2.7" ry="1.0" transform="rotate(8 25.2 33.1)" fill="#b83220"/><ellipse cx="7.3" cy="30.5" rx="2.7" ry="1.0" transform="rotate(118 7.3 30.5)" fill="#f08050"/><ellipse cx="42.9" cy="19.6" rx="2.7" ry="1.0" transform="rotate(36 42.9 19.6)" fill="#903020"/><ellipse cx="23.8" cy="43.9" rx="2.7" ry="1.0" transform="rotate(136 23.8 43.9)" fill="#d04024"/><ellipse cx="29.7" cy="35.3" rx="2.7" ry="1.0" transform="rotate(62 29.7 35.3)" fill="#e86034"/><ellipse cx="8.4" cy="37.2" rx="2.7" ry="1.0" transform="rotate(163 8.4 37.2)" fill="#b83220"/><ellipse cx="6.1" cy="36.1" rx="2.7" ry="1.0" transform="rotate(70 6.1 36.1)" fill="#903020"/><ellipse cx="7.1" cy="29.7" rx="2.7" ry="1.0" transform="rotate(164 7.1 29.7)" fill="#c84422"/><ellipse cx="6.8" cy="18.8" rx="2.7" ry="1.0" transform="rotate(90 6.8 18.8)" fill="#f08050"/><ellipse cx="6.4" cy="28.7" rx="2.7" ry="1.0" transform="rotate(37 6.4 28.7)" fill="#b83220"/><ellipse cx="29.5" cy="45.7" rx="2.7" ry="1.0" transform="rotate(176 29.5 45.7)" fill="#a02a1a"/><ellipse cx="4.6" cy="19.8" rx="2.7" ry="1.0" transform="rotate(58 4.6 19.8)" fill="#d04024"/><ellipse cx="20.7" cy="29.9" rx="2.7" ry="1.0" transform="rotate(79 20.7 29.9)" fill="#c84422"/><ellipse cx="26.3" cy="8.5" rx="2.7" ry="1.0" transform="rotate(5 26.3 8.5)" fill="#b83220"/><ellipse cx="20.6" cy="26.4" rx="2.7" ry="1.0" transform="rotate(96 20.6 26.4)" fill="#e86034"/><ellipse cx="1.9" cy="28.7" rx="2.7" ry="1.0" transform="rotate(162 1.9 28.7)" fill="#903020"/><ellipse cx="39.7" cy="19.1" rx="2.7" ry="1.0" transform="rotate(171 39.7 19.1)" fill="#b83220"/><ellipse cx="25.3" cy="9.3" rx="2.7" ry="1.0" transform="rotate(101 25.3 9.3)" fill="#e86034"/><ellipse cx="3.6" cy="21.5" rx="2.7" ry="1.0" transform="rotate(101 3.6 21.5)" fill="#a02a1a"/><ellipse cx="13.8" cy="4.7" rx="2.7" ry="1.0" transform="rotate(157 13.8 4.7)" fill="#d84a2a"/><ellipse cx="21.6" cy="32.6" rx="2.7" ry="1.0" transform="rotate(98 21.6 32.6)" fill="#a02a1a"/><ellipse cx="15.3" cy="19.9" rx="2.7" ry="1.0" transform="rotate(96 15.3 19.9)" fill="#d04024"/><ellipse cx="21.5" cy="22.1" rx="2.7" ry="1.0" transform="rotate(174 21.5 22.1)" fill="#c84422"/><ellipse cx="2.5" cy="18.3" rx="2.7" ry="1.0" transform="rotate(22 2.5 18.3)" fill="#b83220"/><ellipse cx="22.4" cy="19.0" rx="2.7" ry="1.0" transform="rotate(97 22.4 19.0)" fill="#c84422"/><ellipse cx="42.6" cy="14.7" rx="2.7" ry="1.0" transform="rotate(73 42.6 14.7)" fill="#d84a2a"/><ellipse cx="16.4" cy="25.9" rx="2.7" ry="1.0" transform="rotate(78 16.4 25.9)" fill="#903020"/><ellipse cx="17.0" cy="23.3" rx="2.7" ry="1.0" transform="rotate(76 17.0 23.3)" fill="#d04024"/><ellipse cx="31.9" cy="20.8" rx="2.7" ry="1.0" transform="rotate(140 31.9 20.8)" fill="#d04024"/><ellipse cx="33.3" cy="26.5" rx="2.7" ry="1.0" transform="rotate(2 33.3 26.5)" fill="#a02a1a"/><ellipse cx="18.5" cy="36.8" rx="2.7" ry="1.0" transform="rotate(112 18.5 36.8)" fill="#b83220"/><ellipse cx="7.0" cy="24.5" rx="2.7" ry="1.0" transform="rotate(153 7.0 24.5)" fill="#a02a1a"/><ellipse cx="20.6" cy="5.6" rx="2.7" ry="1.0" transform="rotate(158 20.6 5.6)" fill="#d04024"/><ellipse cx="14.0" cy="34.9" rx="2.7" ry="1.0" transform="rotate(95 14.0 34.9)" fill="#e86034"/><ellipse cx="3.7" cy="19.4" rx="2.7" ry="1.0" transform="rotate(96 3.7 19.4)" fill="#d84a2a"/><ellipse cx="3.6" cy="20.6" rx="2.7" ry="1.0" transform="rotate(110 3.6 20.6)" fill="#e86034"/><ellipse cx="26.7" cy="44.2" rx="2.7" ry="1.0" transform="rotate(146 26.7 44.2)" fill="#e86034"/><ellipse cx="19.3" cy="36.3" rx="2.7" ry="1.0" transform="rotate(166 19.3 36.3)" fill="#d84a2a"/><ellipse cx="26.3" cy="14.5" rx="2.7" ry="1.0" transform="rotate(17 26.3 14.5)" fill="#d84a2a"/><ellipse cx="29.1" cy="29.6" rx="2.7" ry="1.0" transform="rotate(70 29.1 29.6)" fill="#c84422"/><ellipse cx="31.9" cy="11.5" rx="2.7" ry="1.0" transform="rotate(142 31.9 11.5)" fill="#e86034"/><ellipse cx="30.1" cy="41.9" rx="2.7" ry="1.0" transform="rotate(144 30.1 41.9)" fill="#b83220"/><ellipse cx="30.3" cy="42.6" rx="2.7" ry="1.0" transform="rotate(164 30.3 42.6)" fill="#f08050"/><ellipse cx="36.7" cy="35.3" rx="2.7" ry="1.0" transform="rotate(136 36.7 35.3)" fill="#d84a2a"/><ellipse cx="29.7" cy="9.4" rx="2.7" ry="1.0" transform="rotate(4 29.7 9.4)" fill="#903020"/><ellipse cx="30.5" cy="32.4" rx="2.7" ry="1.0" transform="rotate(37 30.5 32.4)" fill="#e86034"/><ellipse cx="46.6" cy="23.2" rx="2.7" ry="1.0" transform="rotate(17 46.6 23.2)" fill="#d04024"/><ellipse cx="37.1" cy="38.7" rx="2.7" ry="1.0" transform="rotate(14 37.1 38.7)" fill="#b83220"/><ellipse cx="17.2" cy="38.4" rx="2.7" ry="1.0" transform="rotate(93 17.2 38.4)" fill="#c84422"/><ellipse cx="28.0" cy="38.1" rx="2.7" ry="1.0" transform="rotate(114 28.0 38.1)" fill="#d04024"/><ellipse cx="30.0" cy="16.4" rx="2.7" ry="1.0" transform="rotate(82 30.0 16.4)" fill="#f08050"/><ellipse cx="16.1" cy="30.2" rx="2.7" ry="1.0" transform="rotate(30 16.1 30.2)" fill="#d04024"/><ellipse cx="21.5" cy="30.5" rx="2.7" ry="1.0" transform="rotate(152 21.5 30.5)" fill="#c84422"/><ellipse cx="15.4" cy="20.2" rx="2.7" ry="1.0" transform="rotate(105 15.4 20.2)" fill="#f08050"/><ellipse cx="28.4" cy="13.5" rx="2.7" ry="1.0" transform="rotate(164 28.4 13.5)" fill="#e86034"/><ellipse cx="30.3" cy="11.0" rx="2.7" ry="1.0" transform="rotate(161 30.3 11.0)" fill="#f08050"/><ellipse cx="26.7" cy="4.5" rx="2.7" ry="1.0" transform="rotate(73 26.7 4.5)" fill="#e86034"/><ellipse cx="36.6" cy="30.3" rx="2.7" ry="1.0" transform="rotate(84 36.6 30.3)" fill="#d04024"/><ellipse cx="42.0" cy="9.7" rx="2.7" ry="1.0" transform="rotate(162 42.0 9.7)" fill="#d04024"/><ellipse cx="27.0" cy="46.7" rx="2.7" ry="1.0" transform="rotate(120 27.0 46.7)" fill="#f08050"/><ellipse cx="27.6" cy="38.8" rx="2.7" ry="1.0" transform="rotate(33 27.6 38.8)" fill="#b83220"/><ellipse cx="6.8" cy="39.2" rx="2.7" ry="1.0" transform="rotate(116 6.8 39.2)" fill="#b83220"/><ellipse cx="26.2" cy="1.8" rx="2.7" ry="1.0" transform="rotate(4 26.2 1.8)" fill="#b83220"/><ellipse cx="23.7" cy="12.9" rx="2.7" ry="1.0" transform="rotate(72 23.7 12.9)" fill="#d04024"/><ellipse cx="25.8" cy="6.0" rx="2.7" ry="1.0" transform="rotate(2 25.8 6.0)" fill="#a02a1a"/><ellipse cx="24.4" cy="46.4" rx="2.7" ry="1.0" transform="rotate(99 24.4 46.4)" fill="#c84422"/><ellipse cx="41.5" cy="20.9" rx="2.7" ry="1.0" transform="rotate(179 41.5 20.9)" fill="#903020"/><ellipse cx="26.8" cy="18.6" rx="2.7" ry="1.0" transform="rotate(108 26.8 18.6)" fill="#d04024"/><ellipse cx="7.7" cy="39.1" rx="2.7" ry="1.0" transform="rotate(69 7.7 39.1)" fill="#e86034"/><ellipse cx="34.9" cy="11.2" rx="2.7" ry="1.0" transform="rotate(107 34.9 11.2)" fill="#c84422"/><ellipse cx="38.5" cy="19.5" rx="2.7" ry="1.0" transform="rotate(95 38.5 19.5)" fill="#a02a1a"/><ellipse cx="16.3" cy="33.7" rx="2.7" ry="1.0" transform="rotate(118 16.3 33.7)" fill="#a02a1a"/><ellipse cx="14.2" cy="7.5" rx="2.7" ry="1.0" transform="rotate(5 14.2 7.5)" fill="#d84a2a"/><ellipse cx="8.8" cy="15.1" rx="2.7" ry="1.0" transform="rotate(74 8.8 15.1)" fill="#c84422"/><ellipse cx="36.7" cy="28.7" rx="2.7" ry="1.0" transform="rotate(72 36.7 28.7)" fill="#f08050"/><ellipse cx="44.1" cy="34.3" rx="2.7" ry="1.0" transform="rotate(77 44.1 34.3)" fill="#903020"/><ellipse cx="24.4" cy="44.5" rx="2.7" ry="1.0" transform="rotate(8 24.4 44.5)" fill="#b83220"/><ellipse cx="42.6" cy="17.0" rx="2.7" ry="1.0" transform="rotate(84 42.6 17.0)" fill="#d84a2a"/><ellipse cx="18.3" cy="19.8" rx="2.7" ry="1.0" transform="rotate(112 18.3 19.8)" fill="#903020"/><ellipse cx="40.2" cy="38.9" rx="2.7" ry="1.0" transform="rotate(64 40.2 38.9)" fill="#e86034"/><ellipse cx="35.4" cy="35.3" rx="2.7" ry="1.0" transform="rotate(120 35.4 35.3)" fill="#903020"/><ellipse cx="9.7" cy="13.6" rx="2.7" ry="1.0" transform="rotate(123 9.7 13.6)" fill="#f08050"/><ellipse cx="27.4" cy="8.0" rx="2.7" ry="1.0" transform="rotate(180 27.4 8.0)" fill="#a02a1a"/><ellipse cx="23.4" cy="13.3" rx="2.7" ry="1.0" transform="rotate(20 23.4 13.3)" fill="#a02a1a"/><ellipse cx="28.4" cy="6.7" rx="2.7" ry="1.0" transform="rotate(65 28.4 6.7)" fill="#a02a1a"/><ellipse cx="9.4" cy="12.0" rx="2.7" ry="1.0" transform="rotate(126 9.4 12.0)" fill="#d84a2a"/><ellipse cx="11.1" cy="9.7" rx="2.7" ry="1.0" transform="rotate(34 11.1 9.7)" fill="#d84a2a"/><ellipse cx="5.9" cy="24.2" rx="2.7" ry="1.0" transform="rotate(35 5.9 24.2)" fill="#d04024"/><ellipse cx="23.0" cy="22.9" rx="2.7" ry="1.0" transform="rotate(47 23.0 22.9)" fill="#d04024"/><ellipse cx="19.2" cy="19.3" rx="2.7" ry="1.0" transform="rotate(97 19.2 19.3)" fill="#b83220"/><ellipse cx="25.3" cy="2.5" rx="2.7" ry="1.0" transform="rotate(29 25.3 2.5)" fill="#d84a2a"/><ellipse cx="15.0" cy="14.2" rx="2.7" ry="1.0" transform="rotate(86 15.0 14.2)" fill="#d84a2a"/><ellipse cx="16.0" cy="38.2" rx="2.7" ry="1.0" transform="rotate(24 16.0 38.2)" fill="#b83220"/><ellipse cx="29.5" cy="9.9" rx="2.7" ry="1.0" transform="rotate(148 29.5 9.9)" fill="#d84a2a"/><ellipse cx="5.8" cy="31.3" rx="2.7" ry="1.0" transform="rotate(70 5.8 31.3)" fill="#e86034"/><ellipse cx="11.9" cy="38.1" rx="2.7" ry="1.0" transform="rotate(178 11.9 38.1)" fill="#f08050"/><ellipse cx="19.4" cy="43.9" rx="2.7" ry="1.0" transform="rotate(149 19.4 43.9)" fill="#e86034"/><ellipse cx="11.9" cy="30.6" rx="2.7" ry="1.0" transform="rotate(17 11.9 30.6)" fill="#f08050"/><ellipse cx="30.3" cy="27.6" rx="2.7" ry="1.0" transform="rotate(102 30.3 27.6)" fill="#903020"/><ellipse cx="30.7" cy="10.1" rx="2.7" ry="1.0" transform="rotate(148 30.7 10.1)" fill="#d04024"/><ellipse cx="33.9" cy="29.4" rx="2.7" ry="1.0" transform="rotate(119 33.9 29.4)" fill="#b83220"/><ellipse cx="19.0" cy="9.3" rx="2.7" ry="1.0" transform="rotate(138 19.0 9.3)" fill="#f08050"/><ellipse cx="22.7" cy="33.0" rx="2.7" ry="1.0" transform="rotate(64 22.7 33.0)" fill="#f08050"/><ellipse cx="19.2" cy="30.4" rx="2.7" ry="1.0" transform="rotate(128 19.2 30.4)" fill="#a02a1a"/><ellipse cx="5.4" cy="32.3" rx="2.7" ry="1.0" transform="rotate(55 5.4 32.3)" fill="#f08050"/><ellipse cx="28.6" cy="46.8" rx="2.7" ry="1.0" transform="rotate(131 28.6 46.8)" fill="#d84a2a"/><ellipse cx="42.6" cy="35.1" rx="2.7" ry="1.0" transform="rotate(4 42.6 35.1)" fill="#c84422"/><ellipse cx="6.8" cy="14.1" rx="2.7" ry="1.0" transform="rotate(133 6.8 14.1)" fill="#f08050"/><ellipse cx="29.4" cy="8.3" rx="2.7" ry="1.0" transform="rotate(151 29.4 8.3)" fill="#e86034"/><ellipse cx="33.4" cy="42.4" rx="2.7" ry="1.0" transform="rotate(159 33.4 42.4)" fill="#a02a1a"/><ellipse cx="28.6" cy="14.5" rx="2.7" ry="1.0" transform="rotate(10 28.6 14.5)" fill="#e86034"/><ellipse cx="3.9" cy="15.2" rx="2.7" ry="1.0" transform="rotate(117 3.9 15.2)" fill="#c84422"/><ellipse cx="40.1" cy="31.2" rx="2.7" ry="1.0" transform="rotate(142 40.1 31.2)" fill="#b83220"/><ellipse cx="18.4" cy="34.9" rx="2.7" ry="1.0" transform="rotate(19 18.4 34.9)" fill="#f08050"/><ellipse cx="40.3" cy="33.8" rx="2.7" ry="1.0" transform="rotate(26 40.3 33.8)" fill="#c84422"/><ellipse cx="24.8" cy="35.3" rx="2.7" ry="1.0" transform="rotate(138 24.8 35.3)" fill="#f08050"/><ellipse cx="25.8" cy="10.1" rx="2.7" ry="1.0" transform="rotate(61 25.8 10.1)" fill="#f08050"/><ellipse cx="16.9" cy="10.2" rx="2.7" ry="1.0" transform="rotate(97 16.9 10.2)" fill="#b83220"/><ellipse cx="18.8" cy="3.3" rx="2.7" ry="1.0" transform="rotate(74 18.8 3.3)" fill="#f08050"/><ellipse cx="37.0" cy="8.1" rx="2.7" ry="1.0" transform="rotate(150 37.0 8.1)" fill="#903020"/><ellipse cx="42.3" cy="19.7" rx="2.7" ry="1.0" transform="rotate(94 42.3 19.7)" fill="#d04024"/><ellipse cx="29.3" cy="10.4" rx="2.7" ry="1.0" transform="rotate(76 29.3 10.4)" fill="#e86034"/><ellipse cx="24.7" cy="33.8" rx="2.7" ry="1.0" transform="rotate(114 24.7 33.8)" fill="#e86034"/><ellipse cx="18.3" cy="37.5" rx="2.7" ry="1.0" transform="rotate(95 18.3 37.5)" fill="#a02a1a"/><ellipse cx="30.0" cy="23.4" rx="2.7" ry="1.0" transform="rotate(56 30.0 23.4)" fill="#b83220"/><ellipse cx="21.5" cy="33.1" rx="2.7" ry="1.0" transform="rotate(166 21.5 33.1)" fill="#d04024"/><ellipse cx="24.6" cy="21.5" rx="2.7" ry="1.0" transform="rotate(87 24.6 21.5)" fill="#d04024"/><ellipse cx="20.6" cy="33.9" rx="2.7" ry="1.0" transform="rotate(65 20.6 33.9)" fill="#d84a2a"/><ellipse cx="11.7" cy="15.2" rx="2.7" ry="1.0" transform="rotate(92 11.7 15.2)" fill="#903020"/><ellipse cx="29.3" cy="35.7" rx="2.7" ry="1.0" transform="rotate(31 29.3 35.7)" fill="#a02a1a"/><ellipse cx="8.9" cy="8.5" rx="2.7" ry="1.0" transform="rotate(99 8.9 8.5)" fill="#a02a1a"/><ellipse cx="10.0" cy="25.9" rx="2.7" ry="1.0" transform="rotate(172 10.0 25.9)" fill="#b83220"/><ellipse cx="13.8" cy="25.7" rx="2.7" ry="1.0" transform="rotate(9 13.8 25.7)" fill="#e86034"/><ellipse cx="29.0" cy="11.0" rx="2.7" ry="1.0" transform="rotate(95 29.0 11.0)" fill="#a02a1a"/><ellipse cx="25.8" cy="19.1" rx="2.7" ry="1.0" transform="rotate(166 25.8 19.1)" fill="#d04024"/><ellipse cx="39.9" cy="8.9" rx="2.7" ry="1.0" transform="rotate(81 39.9 8.9)" fill="#d84a2a"/><ellipse cx="20.4" cy="7.1" rx="2.7" ry="1.0" transform="rotate(28 20.4 7.1)" fill="#e86034"/><ellipse cx="25.7" cy="15.8" rx="2.7" ry="1.0" transform="rotate(163 25.7 15.8)" fill="#e86034"/><ellipse cx="9.6" cy="7.1" rx="2.7" ry="1.0" transform="rotate(48 9.6 7.1)" fill="#d04024"/><ellipse cx="36.3" cy="40.9" rx="2.7" ry="1.0" transform="rotate(0 36.3 40.9)" fill="#e86034"/><ellipse cx="27.4" cy="18.6" rx="2.7" ry="1.0" transform="rotate(49 27.4 18.6)" fill="#b83220"/><ellipse cx="39.2" cy="12.3" rx="2.7" ry="1.0" transform="rotate(15 39.2 12.3)" fill="#a02a1a"/><ellipse cx="34.4" cy="25.7" rx="2.7" ry="1.0" transform="rotate(35 34.4 25.7)" fill="#b83220"/><ellipse cx="27.5" cy="9.5" rx="2.7" ry="1.0" transform="rotate(7 27.5 9.5)" fill="#c84422"/><ellipse cx="15.5" cy="23.0" rx="2.7" ry="1.0" transform="rotate(150 15.5 23.0)" fill="#a02a1a"/><circle cx="24.5" cy="24.5" r="24.5" fill="url(#fg)"/></g></svg>
<svg class="a" style="left:761.9px;top:251.7px" width="50" height="50" viewBox="0 0 50 50"><defs><clipPath id="c3"><circle cx="25" cy="25" r="25"/></clipPath>
<linearGradient id="rbg" x1="0" x2="1"><stop offset="0" stop-color="#7e3a2c"/><stop offset="0.5" stop-color="#5a2a22"/><stop offset="1" stop-color="#6a3228"/></linearGradient></defs>
<filter id="b3"><feGaussianBlur stdDeviation="0.6"/></filter><g clip-path="url(#c3)"><g filter="url(#b3)"><rect width="50" height="50" fill="url(#rbg)"/>
<path d="M12 50 C10 34 11 14 17 7 C21 3 30 3 34 7 C40 14 41 30 39 50 Z" fill="#221414"/>
<ellipse cx="24" cy="21" rx="7.4" ry="10" fill="#8a5a55"/>
<path d="M16.8 15 C18 9 23 7 29 8.5 C32.5 10 33 13.5 31.6 17 C28 12 21 12 16.8 15 Z" fill="#221414"/>
<path d="M19.5 19.5 H22.5 M25.5 19.5 H28.5" stroke="#3a2020" stroke-width="1"/>
<path d="M21.5 27.5 H26" stroke="#4a2828" stroke-width="1"/>
<path d="M4 50 C7 40 15 35 25 35 C35 35 42 40 45 50 Z" fill="#141010"/>
</g></g></svg>
<div class="a" style="left:840.5px;top:251px;width:50.5px;height:50.5px;border-radius:50%;background:#f3d6e3"></div>
<div class="a" style="left:840.5px;top:266.7px;width:50.5px;text-align:center;font-size:20px;line-height:20px;color:#6b1c46;-webkit-text-stroke:0.3px #6b1c46">ВК</div>
<div class="a" style="left:801px;top:330px;width:50px;height:50.5px;border-radius:50%;background:#e1ddf1"></div>
<div class="a" style="left:801px;top:345.8px;width:50.5px;text-align:center;font-size:20px;line-height:20px;color:#28256a;-webkit-text-stroke:0.3px #28256a">ДК</div>
<div class="a" style="left:753.3px;top:230.10px;font-size:8.5px;line-height:8.5px;color:#e8e8e8;letter-spacing:-0.1px">Юлія Віталії...</div>
<svg class="a" style="left:811px;top:229px" width="10" height="10" viewBox="0 0 10 10"><rect x="3.4" y="0.8" width="3.4" height="5.2" rx="1.7" fill="#e0e0e0"/><path d="M1.8 4.4 C1.8 6.6 3.2 7.6 5.1 7.6 C7 7.6 8.4 6.6 8.4 4.4 M5.1 7.6 V9.4" fill="none" stroke="#e0e0e0" stroke-width="0.9"/><path d="M1 1 L9.2 9.2" stroke="#1f1f1f" stroke-width="1.6"/><path d="M1 1 L9.2 9.2" stroke="#e0e0e0" stroke-width="0.9"/></svg>
<div class="a" style="left:832.6px;top:230.10px;font-size:8.5px;line-height:8.5px;color:#e8e8e8;letter-spacing:-0.1px">Валентин Дмит...</div>
<div class="a" style="left:753.3px;top:309.50px;font-size:8.5px;line-height:8.5px;color:#e8e8e8;letter-spacing:-0.1px">Крістіна Се...</div>
<svg class="a" style="left:811px;top:308.5px" width="10" height="10" viewBox="0 0 10 10"><rect x="3.4" y="0.8" width="3.4" height="5.2" rx="1.7" fill="#e0e0e0"/><path d="M1.8 4.4 C1.8 6.6 3.2 7.6 5.1 7.6 C7 7.6 8.4 6.6 8.4 4.4 M5.1 7.6 V9.4" fill="none" stroke="#e0e0e0" stroke-width="0.9"/><path d="M1 1 L9.2 9.2" stroke="#1f1f1f" stroke-width="1.6"/><path d="M1 1 L9.2 9.2" stroke="#e0e0e0" stroke-width="0.9"/></svg>
<div class="a" style="left:832.6px;top:309.50px;font-size:8.5px;line-height:8.5px;color:#e8e8e8;letter-spacing:-0.1px">Володимир...</div>
<svg class="a" style="left:890.5px;top:308.5px" width="10" height="10" viewBox="0 0 10 10"><rect x="3.4" y="0.8" width="3.4" height="5.2" rx="1.7" fill="#e0e0e0"/><path d="M1.8 4.4 C1.8 6.6 3.2 7.6 5.1 7.6 C7 7.6 8.4 6.6 8.4 4.4 M5.1 7.6 V9.4" fill="none" stroke="#e0e0e0" stroke-width="0.9"/><path d="M1 1 L9.2 9.2" stroke="#1f1f1f" stroke-width="1.6"/><path d="M1 1 L9.2 9.2" stroke="#e0e0e0" stroke-width="0.9"/></svg>
<div class="a" style="left:792.2px;top:388.40px;font-size:8.5px;line-height:8.5px;color:#e8e8e8;letter-spacing:-0.1px">Данило Се...</div>
<svg class="a" style="left:851px;top:386.5px" width="10" height="10" viewBox="0 0 10 10"><rect x="3.4" y="0.8" width="3.4" height="5.2" rx="1.7" fill="#e0e0e0"/><path d="M1.8 4.4 C1.8 6.6 3.2 7.6 5.1 7.6 C7 7.6 8.4 6.6 8.4 4.4 M5.1 7.6 V9.4" fill="none" stroke="#e0e0e0" stroke-width="0.9"/><path d="M1 1 L9.2 9.2" stroke="#1f1f1f" stroke-width="1.6"/><path d="M1 1 L9.2 9.2" stroke="#e0e0e0" stroke-width="0.9"/></svg>
<svg class="a" style="left:739px;top:444.5px" width="161" height="96.5" viewBox="0 0 161 96.5">
<defs><radialGradient id="fc" cx="0.5" cy="0.45" r="0.6"><stop offset="0" stop-color="#a68c88"/><stop offset="1" stop-color="#8a7270"/></radialGradient>
<linearGradient id="hr" x1="0" x2="1"><stop offset="0" stop-color="#b8aea6"/><stop offset="0.25" stop-color="#968680"/><stop offset="0.7" stop-color="#84706a"/><stop offset="1" stop-color="#5e4a48"/></linearGradient>
<filter id="bl" x="-10%" y="-10%" width="120%" height="120%"><feGaussianBlur stdDeviation="0.9"/></filter></defs>
<rect x="0" y="0" width="161" height="48" fill="#0259c8"/><rect x="0" y="47.7" width="161" height="48.8" fill="#ffc800"/>
<g filter="url(#bl)">
<path d="M26 96.5 C30 88 38 82 48 78 C53 70 54 58 56 46 C57 34 60 26 68 22.5 C74 20.5 82 20.5 88 22.5 C96 26 100 34 101 46 C102 58 104 68 108 74 C116 79 126 84 134 96.5 Z" fill="url(#hr)"/>
<path d="M60 96.5 C61 86 62 74 63 64 C68 74 72 80 77 82 C83 80 88 74 92 64 C93 76 94 88 95 96.5 Z" fill="#8e8280"/>
<ellipse cx="76" cy="48" rx="12.5" ry="18" fill="url(#fc)"/>
<path d="M63.5 40 C63.5 30 70 26 77 26 C84 26 90 30 90 40 C86 33 70 33 63.5 40 Z" fill="#8e7c74"/>
<path d="M67.5 43.5 C69 42.5 71.5 42.5 73 43.5 M79.5 43.5 C81 42.5 83.5 42.5 85 43.5" stroke="#504242" stroke-width="1.6" fill="none"/>
<path d="M71.5 58 C74 57 78 57 80.5 58" stroke="#7a4646" stroke-width="1.8" fill="none"/>
<path d="M98 70 C108 77 120 80 127 86 C130 89 132 93 134 96.5 H95 Z" fill="#553238"/>
<path d="M26 96.5 C30 88 38 82 48 78 C51 84 53 90 55 96.5 Z" fill="#6a5c5e"/>
</g>
</svg>
<div class="a" id="bstrip"></div>
<div class="a" id="bottom"></div>
<div class="a" style="left:2.7px;top:518px;width:125px;height:16.5px;border-radius:3px;background:rgba(100,100,100,0.92)"></div>
<div class="a" style="left:6.5px;top:522.4px;font-size:9.2px;line-height:9px;color:#f0f0f0;letter-spacing:-0.25px">Валентин Дмитрович Шенгур</div></body></html>
